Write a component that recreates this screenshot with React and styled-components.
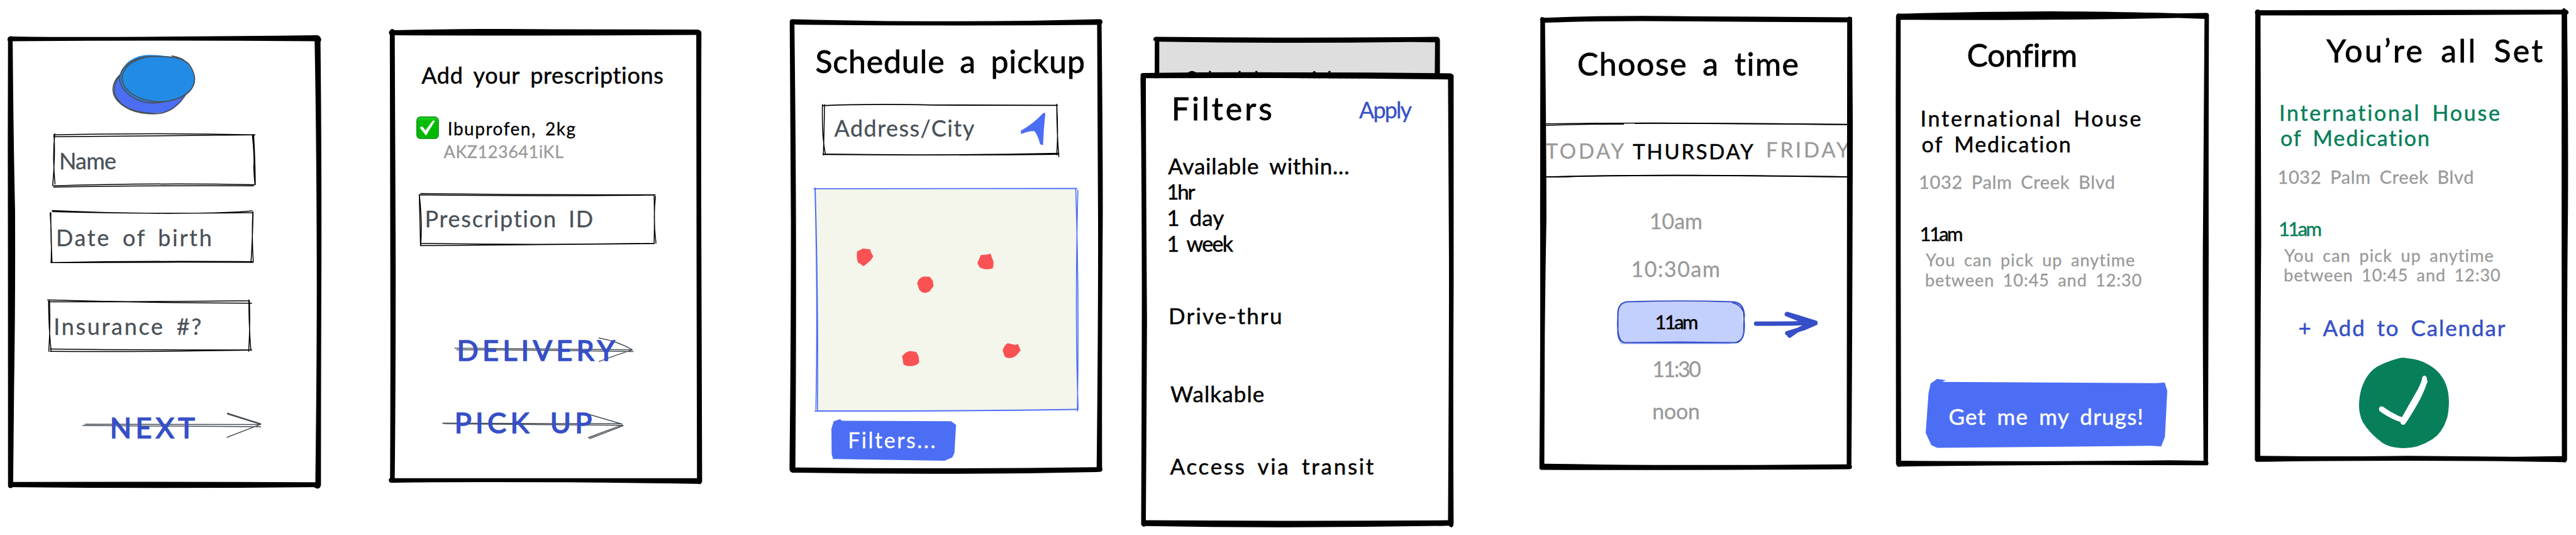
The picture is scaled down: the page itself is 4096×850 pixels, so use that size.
import React from "react";
import styled, { createGlobalStyle } from "styled-components";

const INK = "#000000";
const SLATE = "#495057";
const MUTED = "#999999";
const LINK = "#364fc7";
const BLUE = "#4c6ef5";
const GREEN = "#087f5b";

const GlobalStyle = createGlobalStyle`
  * { box-sizing: border-box; }
  body {
    margin: 0;
    background: #ffffff;
    color: ${INK};
    font-family: Virgil, Excalifont, Lato, "Open Sans", sans-serif;
    overflow: hidden;
  }
`;

/* ---------- layout ---------- */

const Board = styled.main`
  display: flex;
  align-items: flex-start;
  width: 4096px;
  height: 850px;
  padding-left: 12.3px;
`;

const Screen = styled.section`
  position: relative;
  isolation: isolate;
  flex: none;
  display: flex;
  flex-direction: column;
  align-items: flex-start;
  width: ${(p) => p.$w}px;
  height: ${(p) => p.$h}px;
  margin: ${(p) => p.$top}px 0 0 ${(p) => p.$gap || 0}px;
`;

const Stack = styled.div`
  flex: none;
  width: 498.4px;
  margin: 58.4px 0 0 58.1px;
`;

const BackSheet = styled(Screen)`
  width: 455.6px;
  height: 100px;
  margin: 0 0 0 21.2px;
`;

const FrontSheet = styled(Screen)`
  width: 498.4px;
  height: 723.4px;
  margin: -43.2px 0 0;
`;

/* Hand-drawn outline lying behind the content of its parent. */
const Outline = styled.svg`
  position: absolute;
  inset: 0;
  width: 100%;
  height: 100%;
  overflow: visible;
  z-index: -1;
`;

/* ---------- type ---------- */

const Text = styled.div`
  flex: none;
  box-sizing: content-box;
  white-space: pre;
  font-size: ${(p) => p.$size || 36}px;
  line-height: ${(p) => (p.$line ? `${p.$line}px` : 1.2)};
  letter-spacing: ${(p) => p.$track || 0}px;
  word-spacing: 0.2em;
  color: ${(p) => p.$color || "inherit"};
  padding-top: 1.5px;
  margin: ${(p) => p.$mt || 0}px 0 -1.5px ${(p) => p.$ml || 0}px;
  -webkit-text-stroke: 0.3px currentColor;
`;

const Title = styled(Text).attrs({ as: "h1" })`
  font-size: 50px;
  font-weight: 400;
  -webkit-text-stroke: 0.8px currentColor;
`;

const Placeholder = styled(Text)`
  color: ${SLATE};
`;

const Strong = styled(Text)`
  -webkit-text-stroke: 0.5px currentColor;
`;

/* ---------- controls ---------- */

const Box = styled.div`
  position: relative;
  isolation: isolate;
  flex: none;
  display: flex;
  align-items: flex-start;
  width: ${(p) => p.$w}px;
  height: ${(p) => p.$h}px;
  margin: ${(p) => p.$mt || 0}px 0 0 ${(p) => p.$ml || 0}px;
`;

const ActionBox = styled(Box)`
  color: ${LINK};
`;

const ActionLabel = styled(Text)`
  font-size: 45px;
  -webkit-text-stroke: 1.6px currentColor;
`;

const Button = styled(Box)`
  justify-content: ${(p) => (p.$center ? "center" : "flex-start")};
  color: #ffffff;
`;

const Row = styled.div`
  display: flex;
  align-items: flex-start;
  margin: ${(p) => p.$mt || 0}px 0 0 ${(p) => p.$ml || 0}px;
`;

const SheetHeader = styled.header`
  display: flex;
  justify-content: space-between;
  align-items: flex-start;
  width: 100%;
  padding: 24.8px 67.7px 0 50.1px;
`;

const DayStrip = styled.div`
  position: relative;
  isolation: isolate;
  flex: none;
  display: grid;
  grid-template-columns: 138.5px 211.6px 1fr;
  align-items: start;
  width: 479.4px;
  height: 88.6px;
  margin: 64.6px 0 0 11.3px;
  overflow: hidden;
`;

const Slots = styled.div`
  display: flex;
  flex-direction: column;
  align-items: center;
  width: 436.8px;
`;

const Graphic = styled.svg`
  flex: none;
  display: block;
  width: ${(p) => p.$w}px;
  height: ${(p) => p.$h}px;
  margin: ${(p) => p.$mt || 0}px 0 0 ${(p) => p.$ml || 0}px;
  overflow: visible;
`;

const LocateIcon = styled(Graphic)`
  margin: 14.4px 22.3px 0 auto;
`;

/* ---------- sketched shapes ---------- */

const Sketch = ({ box, children }) => (
  <Outline viewBox={box} preserveAspectRatio="none" aria-hidden="true">
    {children}
  </Outline>
);

const Frame = ({ box, outer, inner, fill }) => (
  <Sketch box={box}>
    {fill && <path d={inner} fill={fill} />}
    <path d={`${outer} ${inner}`} fill={INK} fillRule="evenodd" />
  </Sketch>
);

const Pen = ({ d, color = INK, width = 1.5, fill = "none" }) => (
  <path
    d={d}
    fill={fill}
    stroke={color}
    strokeWidth={width}
    strokeLinecap="round"
    strokeLinejoin="round"
    vectorEffect="non-scaling-stroke"
  />
);

const Details = ({ color, titleTop, pitch, addressTop, left }) => (
  <>
    <Strong $size={34} $line={pitch} $track={2.75} $mt={titleTop} $ml={left} $color={color}>
      International House
    </Strong>
    <Strong $size={34} $line={pitch} $track={1.98} $ml={left + 2} $color={color}>
      of Medication
    </Strong>
    <Text $size={29} $track={0.65} $mt={addressTop} $ml={left - 2.5} $color={MUTED}>
      1032 Palm Creek Blvd
    </Text>
    <Strong $size={31} $track={-2.6} $mt={46.3} $ml={left - 1} $color={color}>
      11am
    </Strong>
    <Text $size={27} $line={31.6} $track={1.11} $mt={7.5} $ml={left + 8.4} $color={MUTED}>
      You can pick up anytime
    </Text>
    <Text $size={27} $line={31.6} $track={0.98} $ml={left + 7.4} $color={MUTED}>
      between 10:45 and 12:30
    </Text>
  </>
);

/* ---------- screens ---------- */

const SignUp = () => (
  <Screen $w={499.1} $h={720.4} $top={55.9}>
    <Frame
      box="33 42 1340 1504"
      outer="M35 62 Q30 54 36 49 Q42 43 56 46 Q320 49 620 47 Q1000 45 1344 42 Q1362 40 1367 48 Q1376 55 1369 64 Q1374 420 1373 800 Q1371 1200 1371 1535 Q1366 1548 1352 1545 L1340 1541 Q700 1546 56 1541 Q40 1549 35 1538 Q35 800 34 400Z"
      inner="M55 62 Q58 380 65 620 Q67 900 61 1200 L57 1524 Q700 1522 1347 1525 Q1354 1100 1353 800 Q1352 400 1344 62 Q700 58 55 62Z"
    />
    <Graphic $w={132.6} $h={95.3} $mt={31.1} $ml={166.1} viewBox="479 107 356 199" preserveAspectRatio="none">
      <path d="M511 173 Q480 205 488 235 Q520 285 590 298 Q720 308 750 280 Q780 262 793 238 L740 200Z" fill={BLUE} />
      <Pen color={SLATE} width={1.7} d="M514 173 C470 205 474 245 520 272 C570 303 640 306 690 301 C740 292 775 262 795 238 M512 177 C478 212 482 240 517 268 C560 298 640 302 680 302" />
      <path d="M512 190 Q520 120 620 108 Q700 106 780 120 Q826 146 832 193 Q828 235 740 256 Q620 275 555 243 Q512 215 512 190Z" fill="#228be6" />
      <Pen color={SLATE} width={1.8} d="M640 112 C560 118 510 150 512 190 C520 235 590 268 660 267 C720 264 780 252 808 230 C840 205 838 175 812 143 C790 118 740 114 690 113 C600 106 525 140 522 185 C525 230 600 264 690 263 C750 261 790 243 815 224 M735 111 C760 113 790 124 796 133" />
    </Graphic>

    <Box $w={323.4} $h={87.2} $mt={29.2} $ml={70.4}>
      <Sketch box="222 367 868 182">
        <Pen d="M228 374 Q640 366 1088 374 M228 380 Q640 377 1084 374 M228 543 Q640 533 1087 539 M228 547 Q640 541 1081 543 M233 370 Q223 450 234 537 M230 374 Q235 450 224 542" />
        <Pen width={2} d="M1077 375 Q1087 450 1083 480 Q1084 510 1088 538 M1081 374 Q1087 450 1088 538" />
      </Sketch>
      <Placeholder $track={-0.78} $mt={21.5} $ml={11.2}>Name</Placeholder>
    </Box>

    <Box $w={324.5} $h={85.7} $mt={34.5} $ml={66.7}>
      <Sketch box="212 621 871 179">
        <Pen d="M222 624 Q520 635 800 633 Q960 633 1076 625 M224 628 Q600 636 1080 631 M217 797 Q600 795 1080 796 M217 797 Q600 791 1078 794 M214 632 Q222 710 218 797 M217 631 Q216 710 222 795 M1079 629 Q1074 720 1081 795 M1080 629 Q1078 720 1071 797" />
      </Sketch>
      <Placeholder $track={2.64} $mt={21} $ml={10}>Date of birth</Placeholder>
    </Box>

    <Box $w={326} $h={85.2} $mt={56.1} $ml={63}>
      <Sketch box="202 917 875 178">
        <Pen d="M204 920 Q640 930 1075 931 M211 926 Q640 927 1064 923 M215 1083 Q640 1087 1075 1086 M215 1091 Q640 1093 1074 1087 M208 924 Q209 1020 219 1089 M212 924 Q216 1010 209 1091 M1063 920 Q1063 1010 1071 1085 M1065 922 Q1069 1010 1062 1091" />
      </Sketch>
      <Placeholder $track={2.68} $mt={21} $ml={10}>Insurance #?</Placeholder>
    </Box>

    <ActionBox as="a" $w={285} $h={41.6} $mt={94.9} $ml={118.5}>
      <Sketch box="351 1293 765 87">
        <Pen color={SLATE} d="M363 1333 L1112 1334 M353 1337 L1112 1341 M970 1296 L1112 1331 M970 1299 L1110 1333 M969 1376 L1112 1333" />
      </Sketch>
      <ActionLabel $track={6.3} $mt={-4.7} $ml={44}>NEXT</ActionLabel>
    </ActionBox>
  </Screen>
);

const Prescriptions = () => (
  <Screen $w={498.8} $h={723.3} $top={45.8} $gap={106.6}>
    <Frame
      box="91 21 1339 1510"
      outer="M96 40 Q88 33 96 26 Q106 17 116 25 Q500 19 800 22 L1408 23 Q1427 24 1426 36 Q1424 400 1426 800 L1429 1522 Q1426 1533 1412 1530 Q700 1521 101 1526 Q90 1525 92 1514 L97 1510 Q99 1200 98 800Z"
      inner="M117 42 Q119 400 121 800 Q121 1200 117 1511 L1407 1511 Q1405 800 1404 41 Q700 44 117 42Z"
    />
    <Strong $track={0.66} $mt={50.3} $ml={52.2}>Add your prescriptions</Strong>
    <Row $mt={45.4} $ml={44.3}>
      <Graphic $w={35.8} $h={35.9} viewBox="0 0 36 36">
        <defs>
          <linearGradient id="tick" x1="0" y1="0" x2="0" y2="1">
            <stop offset="0" stopColor="#25d32b" />
            <stop offset="0.2" stopColor="#06bd06" />
            <stop offset="1" stopColor="#02b502" />
          </linearGradient>
        </defs>
        <rect x="0.7" y="0.7" width="34.6" height="34.6" rx="6" fill="url(#tick)" stroke="#0a9412" strokeWidth="1.4" />
        <path d="M5.5 17.8 L9.3 15.6 L14.7 22.2 L26.2 6.8 L29.8 7 L15.4 30.6Z" fill="#fff" />
      </Graphic>
      <div>
        <Text $size={28} $track={1.51} $mt={2.1} $ml={13.7}>Ibuprofen, 2kg</Text>
        <Text $size={27} $track={0.53} $mt={2.9} $ml={7.5} $color={MUTED}>AKZ123641iKL</Text>
      </div>
    </Row>
    <Box $w={377.4} $h={83.8} $mt={51} $ml={48.4}>
      <Sketch box="221 566 1013 175">
        <Pen d="M229 567 Q640 571 1230 571 M222 571 Q720 577 1226 572 M228 732 Q720 739 1226 732 M228 740 Q720 737 1226 733 M223 571 Q236 660 229 738 M223 573 Q226 660 228 737 M1231 576 Q1220 650 1233 732 M1225 572 Q1228 650 1225 732" />
      </Sketch>
      <Placeholder $track={1.77} $mt={18.1} $ml={9}>Prescription ID</Placeholder>
    </Box>
    <ActionBox as="a" $w={284.6} $h={39.3} $mt={145.1} $ml={105.4}>
      <Sketch box="374 1044 764 82">
        <Pen color={SLATE} d="M375 1080 L1130 1085 M383 1085 Q760 1086 1136 1091 M990 1046 Q1070 1057 1132 1085 M990 1124 Q1060 1103 1130 1086" />
      </Sketch>
      <ActionLabel $track={6.3} $mt={-8} $ml={3}>DELIVERY</ActionLabel>
    </ActionBox>
    <ActionBox as="a" $w={288.3} $h={40.7} $mt={82.4} $ml={85.3}>
      <Sketch box="320 1298 774 85">
        <Pen color={SLATE} d="M322 1330 L1086 1332 M327 1332 L1092 1337 M944 1300 L1088 1333 M944 1378 L1086 1337 M950 1381 L1092 1339" />
      </Sketch>
      <ActionLabel $track={6.4} $mt={-14.3} $ml={19.4}>PICK UP</ActionLabel>
    </ActionBox>
  </Screen>
);

const PINS = [
  "M380 796 L405 786 L436 789 L440 800 L449 812 L438 825 L408 845 L383 832 Q376 815 380 796Z",
  "M893 834 L908 808 L930 807 L949 803 L962 830 Q962 850 957 853 Q925 859 902 848Z",
  "M636 902 Q640 884 665 879 L690 880 L703 893 L706 911 L688 929 Q660 940 645 922Z",
  "M572 1144 Q585 1128 605 1126 L632 1129 L642 1143 L645 1164 L635 1171 Q605 1182 578 1171Z",
  "M1001 1124 Q1008 1106 1023 1100 L1054 1106 L1066 1103 L1078 1124 L1058 1142 Q1030 1156 1010 1145Z",
];

const Pickup = () => (
  <Screen $w={499.2} $h={723.3} $top={30.3} $gap={138.5}>
    <Frame
      box="90 26 1340 1510"
      outer="M92 40 Q90 26 104 27 Q400 34 760 34 Q1100 34 1412 27 Q1428 26 1427 38 L1423 44 Q1429 500 1428 700 Q1424 1100 1425 1514 Q1430 1524 1420 1528 L1400 1529 Q750 1540 104 1531 Q90 1530 91 1516 Q97 1100 97 700Z"
      inner="M112 45 Q119 500 119 900 Q119 1200 116 1514 Q750 1520 1402 1513 Q1409 1000 1408 700 L1404 46 Q750 50 112 45Z"
    />
    <Title $track={0.85} $mt={35.4} $ml={41.2}>Schedule a pickup</Title>
    <Box $w={377} $h={84.3} $mt={39.2} $ml={51.9}>
      <Sketch box="229 307 1012 176">
        <Pen width={1.8} d="M231 313 Q440 306 700 311 L1234 312 M234 474 Q740 480 1240 471 M234 475 Q740 478 1236 474" />
        <Pen d="M231 309 Q228 420 244 474 M240 309 Q238 400 235 476 M1231 308 Q1238 400 1231 476 M1231 312 Q1232 410 1240 482" />
      </Sketch>
      <Placeholder $track={1.43} $mt={15.3} $ml={19.4}>Address/City</Placeholder>
      <LocateIcon $w={39.2} $h={51.7} viewBox="1076 337 105 108" preserveAspectRatio="none">
        <path d="M1076 397 Q1130 374 1172 338 L1181 338 Q1174 390 1171 445 L1159 442 Q1148 410 1134 398 Q1105 398 1078 408Z" fill={BLUE} />
      </LocateIcon>
    </Box>
    <Box $w={421} $h={356.4} $mt={48.4} $ml={39.2}>
      <Sketch box="195 584 1130 744">
        <path d="M201 590 L1316 590 L1320 1319 L205 1326Z" fill="#f4f5eb" />
        <Pen color={BLUE} width={1.9} d="M196 588 Q740 589 1317 587 M200 1325 Q760 1326 1322 1320" />
        <Pen color={BLUE} width={1.6} d="M201 585 Q214 940 211 1322 M200 588 Q213 960 204 1320 M1313 589 Q1328 940 1320 1325 M1322 593 Q1309 1000 1323 1318" />
        {PINS.map((d) => (
          <path key={d} d={d} fill="#fa5252" />
        ))}
      </Sketch>
    </Box>
    <Button $w={198.2} $h={66.1} $mt={12.4} $ml={66.4}>
      <Sketch box="268 1354 532 138">
        <path d="M268 1386 L278 1361 L305 1354 L313 1359 L779 1361 L800 1373 L793 1466 L784 1481 L751 1492 L275 1486 L269 1470Z" fill={BLUE} />
      </Sketch>
      <Text $size={34} $track={2.53} $mt={11.4} $ml={26.5}>Filters...</Text>
    </Button>
  </Screen>
);

const Filters = () => (
  <Stack>
    <BackSheet>
      <Frame
        box="155 21 1223 195.5"
        fill="#dedede"
        outer="M156 34 Q152 23 165 22 Q700 26 1250 23 L1362 22 Q1378 21 1378 34 L1378 216 L160 216 L161 34Z"
        inner="M180 37 L180 200 L1355 200 L1357 39 L1250 38 Q700 44 180 37Z"
      />
      <Text $size={33} $track={0.3} $mt={45} $ml={52}>Schedule a pickup</Text>
    </BackSheet>
    <FrontSheet as="div">
      <Frame
        box="98 132 1336 1414"
        fill="#ffffff"
        outer="M100 146 Q97 134 110 134 Q400 131 760 132 Q1100 132 1420 135 Q1437 137 1434 148 L1434 800 Q1431 1200 1434 1530 Q1434 1544 1424 1545 L1412 1540 Q760 1549 122 1541 Q108 1546 102 1536 Q105 1000 105 800 Q104 400 99 150Z"
        inner="M122 150 Q123 500 127 900 Q125 1200 122 1523 Q760 1526 1410 1523 Q1415 900 1414 700 L1410 154 Q760 148 122 150Z"
      />
      <SheetHeader>
        <Title as="h2" $track={4.06}>Filters</Title>
        <Text $track={-1.91} $mt={11.4} $color={LINK}>Apply</Text>
      </SheetHeader>
      <Strong $size={35} $line={41} $track={0.8} $mt={41.4} $ml={44.8}>Available within...</Strong>
      <Strong $size={33} $line={41} $track={-2.2} $ml={42.8}>1hr</Strong>
      <Strong $size={35} $line={41} $ml={42.8}>1 day</Strong>
      <Strong $size={34} $line={41} $track={-1.7} $ml={42.8}>1 week</Strong>
      <Strong $size={35} $track={2.18} $mt={73.4} $ml={45.5}>Drive-thru</Strong>
      <Strong $size={35} $track={1.11} $mt={81.8} $ml={48.5}>Walkable</Strong>
      <Strong $size={35} $track={2.71} $mt={72.6} $ml={48}>Access via transit</Strong>
    </FrontSheet>
  </Stack>
);

const ChooseTime = () => (
  <Screen $w={499.1} $h={721.9} $top={24.8} $gap={135.6}>
    <Frame
      box="88 27 1340 1507"
      outer="M94 44 Q90 32 102 31 L113 34 Q400 24 760 29 L1406 32 Q1412 28 1425 33 L1428 400 Q1426 1100 1422 1518 Q1428 1524 1420 1530 L1408 1531 Q700 1535 98 1533 Q88 1532 90 1522 Q95 1100 93 700Z"
      inner="M114 50 Q120 500 120 700 Q115 900 113 1100 L111 1513 Q700 1520 1402 1515 L1403 800 L1404 49 L760 46 Q400 42 114 50Z"
    />
    <Title $track={1.51} $mt={44.5} $ml={61.4}>Choose a time</Title>
    <DayStrip>
      <Sketch box="118 380 1287 185">
        <Pen width={1.5} d="M118 386 Q500 381 760 384 L1405 388 M118 391 Q300 386 450 387 M118 562 Q500 555 800 557 L1405 561 M118 563 L230 561" />
        <Pen width={2} d="M500 384 Q760 383 1405 388 M118 562 Q400 556 760 557 Q1000 557 1405 562" />
      </Sketch>
      <Text $size={33} $track={3.6} $mt={24.4} $color={MUTED}>TODAY</Text>
      <Strong $size={33} $track={2.7} $mt={25.8}>THURSDAY</Strong>
      <Text $size={33} $track={3.79} $mt={22.5} $color={MUTED}>FRIDAY</Text>
    </DayStrip>
    <Slots>
      <Text $size={34} $mt={46.9} $color={MUTED}>10am</Text>
      <Text $size={34} $track={1.54} $mt={35.8} $color={MUTED}>10:30am</Text>
    </Slots>
    <Row $mt={30.2} $ml={124.5}>
      <Box $w={203} $h={70.4}>
        <Sketch box="422 971 545 147">
          <path d="M442 1117 Q426 1110 426 1080 L426 1010 Q428 980 460 977 L920 978 Q950 980 955 1000 L962 1090 Q960 1104 925 1112 L900 1117Z" fill="#c3cffd" />
          <Pen color={LINK} width={2} d="M465 976 Q690 971 915 976 Q962 976 966 1020 Q962 1050 964 1075 Q958 1112 925 1112 L455 1112 Q424 1108 426 1070 L426 1010 Q430 980 465 976 M440 984 Q424 1000 427 1020 Q422 1060 429 1085 Q434 1108 455 1112 M915 979 Q950 985 962 1010 L966 1050 Q966 1090 955 1098 Q944 1109 925 1112 L690 1110 L455 1112" />
        </Sketch>
        <Strong $size={31} $track={-2.6} $mt={14.5} $ml={60.5}>11am</Strong>
      </Box>
      <Graphic $w={101.3} $h={42.1} $mt={17.7} $ml={15.3} viewBox="1008 1008 272 88" preserveAspectRatio="none">
        <Pen color={LINK} width={7} d="M1017 1048 Q1140 1049 1270 1045 M1150 1016 L1270 1045 M1148 1017 L1235 1044 M1150 1080 L1225 1062 L1270 1047 M1160 1088 Q1200 1062 1260 1049" />
      </Graphic>
    </Row>
    <Slots>
      <Text $size={34} $track={-2.4} $mt={16.7} $color={MUTED}>11:30</Text>
      <Text $size={34} $track={-0.3} $mt={26.7} $color={MUTED}>noon</Text>
    </Slots>
  </Screen>
);

const Confirm = () => (
  <Screen $w={499.1} $h={723.7} $top={17.7} $gap={68.6}>
    <Frame
      box="92 12 1340 1511"
      outer="M94 32 Q94 20 104 19 L114 20 Q400 13 760 12 Q1100 14 1300 19 L1418 17 Q1432 17 1430 28 Q1428 500 1429 800 L1426 1506 Q1431 1512 1424 1518 L1408 1518 Q760 1514 114 1522 Q98 1526 94 1512 L93 300Z"
      inner="M114 40 L114 800 L116 1503 Q760 1506 1260 1501 L1407 1503 Q1403 1100 1404 800 Q1407 500 1411 37 L1300 34 Q760 43 114 40Z"
    />
    <Title $track={-0.35} $mt={38.2} $ml={113.3}>Confirm</Title>
    <Details titleTop={50.1} pitch={41} addressTop={22.2} left={39.3} />
    <Button $center $w={384.1} $h={109.6} $mt={143.1} $ml={47.5}>
      <Sketch box="219 1233 1031 229">
        <path d="M219 1412 L231 1280 L240 1248 L268 1233 L305 1237 L290 1243 L1202 1247 L1239 1245 L1250 1272 L1240 1426 L1224 1457 L1183 1455 L268 1462 L243 1453Z" fill={BLUE} />
      </Sketch>
      <Strong $size={35} $track={1.2} $mt={36.3}>Get me my drugs!</Strong>
    </Button>
  </Screen>
);

const AllSet = () => (
  <Screen $w={499.6} $h={721.8} $top={12.5} $gap={71.7}>
    <Frame
      box="95 26 1440 1507"
      outer="M98 46 Q93 37 102 32 Q110 28 118 33 Q800 31 1504 31 Q1512 22 1521 30 Q1537 34 1533 44 L1527 47 Q1533 400 1531 700 Q1526 1000 1527 1524 Q1524 1535 1510 1532 Q1200 1527 800 1527 Q400 1527 110 1531 Q95 1532 96 1520 L96 800Z"
      inner="M122 50 Q124 500 125 800 Q121 1200 121 1511 Q400 1514 800 1511 L1290 1514 L1503 1512 L1502 700 L1502 47 Q800 50 122 50Z"
    />
    <Title $track={3.27} $mt={36.3} $ml={114.3}>You’re all Set</Title>
    <Details color={GREEN} titleTop={48.6} pitch={40.6} addressTop={24} left={38.9} />
    <Strong $size={35} $track={1.89} $mt={45.6} $ml={69.6} $color={LINK}>+ Add to Calendar</Strong>
    <Graphic $w={142.9} $h={145.1} $mt={27.5} $ml={165.9} viewBox="573 1184 412 303" preserveAspectRatio="none">
      <path d="M740 1192 Q770 1184 790 1188 Q850 1191 890 1209 Q955 1235 976 1285 Q986 1310 985 1340 Q983 1375 975 1390 Q955 1435 910 1457 Q845 1487 780 1487 Q715 1486 680 1469 Q620 1437 590 1400 Q573 1375 573 1345 Q574 1315 583 1292 Q605 1240 655 1217 Q700 1200 740 1192Z" fill={GREEN} />
      <path d="M668 1364 Q660 1355 670 1349 Q679 1346 688 1352 Q730 1374 770 1384 L828 1310 Q860 1272 863 1252 Q868 1244 878 1247 Q886 1252 884 1262 L888 1264 Q866 1310 843 1338 Q810 1380 784 1407 Q774 1413 764 1405 L763 1400 Q715 1389 668 1364Z" fill="#fff" />
    </Graphic>
  </Screen>
);

export default function App() {
  return (
    <>
      <GlobalStyle />
      <Board>
        <SignUp />
        <Prescriptions />
        <Pickup />
        <Filters />
        <ChooseTime />
        <Confirm />
        <AllSet />
      </Board>
    </>
  );
}
